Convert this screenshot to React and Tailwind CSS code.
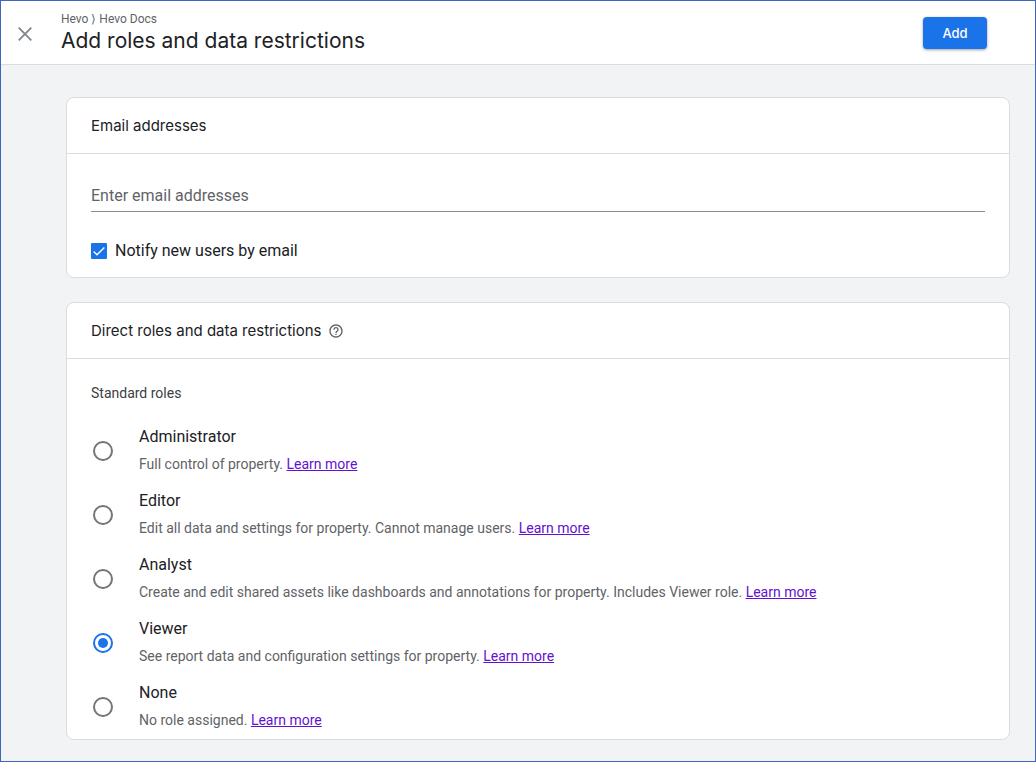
import { useState } from "react";

const ROLES = [
  { id: "admin", name: "Administrator", text: "Full control of property." },
  { id: "editor", name: "Editor", text: "Edit all data and settings for property. Cannot manage users." },
  {
    id: "analyst",
    name: "Analyst",
    text: "Create and edit shared assets like dashboards and annotations for property. Includes Viewer role.",
  },
  { id: "viewer", name: "Viewer", text: "See report data and configuration settings for property." },
  { id: "none", name: "None", text: "No role assigned." },
];

function Card({ title, children }) {
  return (
    <section className="rounded-lg border border-[#dadce0] bg-white">
      <h2 className="flex h-14 items-center gap-1.5 border-b border-[#dadce0] px-6 font-['Inter',sans-serif] text-[15px] leading-6">
        {title}
      </h2>
      {children}
    </section>
  );
}

function HelpButton() {
  return (
    <button type="button" aria-label="Help" className="text-[#5f6368]">
      <svg viewBox="0 0 24 24" className="size-4" fill="currentColor">
        <path d="M11 18h2v-2h-2v2zm1-16C6.480 2 2 6.480 2 12s4.480 10 10 10 10-4.480 10-10S17.520 2 12 2zm0 18c-4.410 0-8-3.590-8-8s3.590-8 8-8 8 3.590 8 8-3.590 8-8 8zm0-14c-2.210 0-4 1.790-4 4h2c0-1.100.9-2 2-2s2 .9 2 2c0 2-3 1.750-3 5h2c0-2.250 3-2.500 3-5 0-2.210-1.790-4-4-4z" />
      </svg>
    </button>
  );
}

function RoleRow({ role, checked, onSelect }) {
  return (
    <div className="flex h-16 items-center gap-6">
      <div className="grid size-6 shrink-0 place-items-center">
        <input
          type="radio"
          name="role"
          id={role.id}
          checked={checked}
          onChange={onSelect}
          className="size-5 appearance-none rounded-full border-2 border-[#757575] checked:border-[#1a73e8] checked:bg-[#1a73e8] checked:bg-clip-content checked:p-[3px]"
        />
      </div>
      <div className="flex flex-col gap-[5px] pb-[3px]">
        <label htmlFor={role.id} className="text-base leading-6">
          {role.name}
        </label>
        <p className="text-sm leading-5 text-[#5f6368]">
          {role.text}{" "}
          <a href="#learn-more" className="text-[#6410d0] underline">
            Learn more
          </a>
        </p>
      </div>
    </div>
  );
}

export default function App() {
  const [role, setRole] = useState("viewer");
  const [notify, setNotify] = useState(true);

  return (
    <div className="min-h-screen border border-[#3c67bd] bg-[#f1f3f4] font-['Roboto',sans-serif] text-[#202124]">
      <header className="flex h-16 items-center border-b border-[#dadce0] bg-white pr-12 pl-3">
        <button type="button" aria-label="Close" className="grid h-[26px] w-6 place-items-center pt-0.5 text-[#80868b]">
          <svg viewBox="0 0 14 14" className="size-3.5" fill="none" stroke="currentColor" strokeWidth="1.8">
            <path d="M0.700 0.700 13.300 13.300M13.300 0.700 0.700 13.300" />
          </svg>
        </button>
        <div className="ml-6 flex-1">
          <p className="text-xs text-[#5f6368]">Hevo ⟩ Hevo Docs</p>
          <h1 className="font-['Inter',sans-serif] text-[21px] leading-7">Add roles and data restrictions</h1>
        </div>
        <button
          type="button"
          className="h-8 w-16 rounded bg-[#1a73e8] font-['Inter',sans-serif] text-[13px] leading-5 font-medium text-white shadow-[0_1px_3px_rgba(60,64,67,0.5)]"
        >
          Add
        </button>
      </header>

      <main className="flex flex-col gap-6 pt-8 pr-[25px] pb-5 pl-[65px]">
        <Card title="Email addresses">
          <div className="px-6 pt-[26px] pb-[14px]">
            <input
              type="email"
              aria-label="Email addresses"
              placeholder="Enter email addresses"
              className="block h-8 w-full border-b border-[#8a8d91] text-base outline-none placeholder:text-[#5f6368]"
            />
            <div className="mt-[27px] flex h-6 items-center gap-2">
              <span className="relative grid size-4 place-items-center">
                <input
                  id="notify"
                  type="checkbox"
                  checked={notify}
                  onChange={(e) => setNotify(e.target.checked)}
                  className="size-4 appearance-none rounded-[1px] border-2 border-[#757575] checked:border-[#1a73e8] checked:bg-[#1a73e8]"
                />
                {notify && (
                  <svg viewBox="0 0 16 16" className="pointer-events-none absolute inset-0 size-4" fill="none" stroke="white" strokeWidth="1.400">
                    <path d="M2.600 8.500 6 11.800 13.400 4.400" />
                  </svg>
                )}
              </span>
              <label htmlFor="notify" className="text-base">
                Notify new users by email
              </label>
            </div>
          </div>
        </Card>

        <Card
          title={
            <>
              Direct roles and data restrictions
              <HelpButton />
            </>
          }
        >
          <div className="px-6 pt-6">
            <h3 className="mb-4 text-sm leading-5 text-[#3c4043]">Standard roles</h3>
            {ROLES.map((item) => (
              <RoleRow key={item.id} role={item} checked={role === item.id} onSelect={() => setRole(item.id)} />
            ))}
          </div>
        </Card>
      </main>
    </div>
  );
}
